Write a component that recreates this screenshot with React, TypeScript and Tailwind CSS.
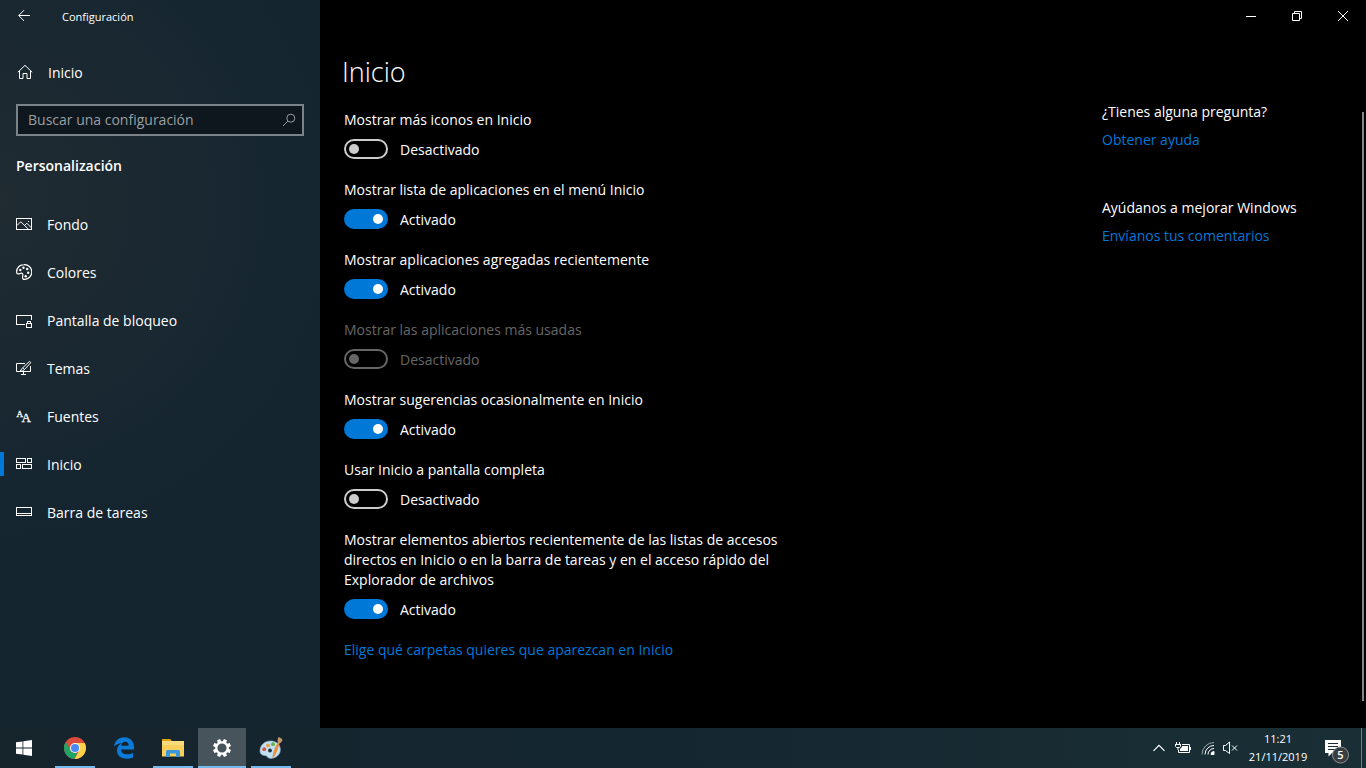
import { useState } from 'react';
import type { ReactNode } from 'react';

type IconProps = { children: ReactNode; crisp?: boolean };

function Icon16({ children, crisp }: IconProps) {
  return (
    <svg
      viewBox="0 0 16 16"
      className="size-4 shrink-0"
      fill="none"
      stroke="currentColor"
      shapeRendering={crisp ? 'crispEdges' : 'auto'}
      aria-hidden="true"
    >
      {children}
    </svg>
  );
}

const navItems: { label: string; icon: ReactNode; current?: boolean }[] = [
  {
    label: 'Fondo',
    icon: (
      <Icon16>
        <rect x=".5" y="2.5" width="15" height="11" />
        <path d="M1 9.500 4.800 5.700 12.300 13.200M8.600 9.400 10.800 7.200 15.400 11.800" />
        <path d="M12 5.500h1" />
      </Icon16>
    ),
  },
  {
    label: 'Colores',
    icon: (
      <Icon16>
        <path
          d="M.6 7.800C.8 3.400 4 .6 8 .6a7.400 7.400 0 0 1 .8 14.800c-1.600.1-2.300-.7-2.300-1.800 0-1.500.8-2.800 0-3.900-.7-1-1.700-.5-2.600-.1C2 10.300.5 9.700.6 7.800Z"
          strokeWidth="1.200"
        />
        <g fill="currentColor" stroke="none">
          <circle cx="4.300" cy="6" r="1.200" />
          <circle cx="7.500" cy="3.800" r="1.200" />
          <circle cx="11.200" cy="5" r="1.200" />
          <circle cx="12.200" cy="8.800" r="1.200" />
          <circle cx="9.700" cy="12.200" r="1.200" />
        </g>
      </Icon16>
    ),
  },
  {
    label: 'Pantalla de bloqueo',
    icon: (
      <Icon16 crisp>
        <path d="M9 12.500H.5V3.500H15.500V8" />
        <rect x="10.500" y="11.500" width="5" height="4" />
        <path d="M11.500 11V9.500H14.500V11" />
      </Icon16>
    ),
  },
  {
    label: 'Temas',
    icon: (
      <Icon16>
        <path d="M9 3.500H.5V11.500H14.500V6" />
        <path d="M7.500 11.500V14M5 14.500H10" />
        <path d="M4 10.500c1.500 0 1.300-1.500 2.300-2.300L13 1.800c.8-.7 2.100.4 1.400 1.300L8.500 9.500C7.500 10.900 5.500 11.200 4 10.500ZM6.600 7.900 8.500 9.600" />
      </Icon16>
    ),
  },
  {
    label: 'Fuentes',
    icon: (
      <Icon16>
        <g fill="currentColor" strokeWidth=".3" className="font-['Liberation_Serif',serif]">
          <text x=".5" y="9" fontSize="9">A</text>
          <text x="5.500" y="13.500" fontSize="13">A</text>
        </g>
      </Icon16>
    ),
  },
  {
    label: 'Inicio',
    current: true,
    icon: (
      <Icon16 crisp>
        <rect x=".5" y="2.500" width="9" height="4" />
        <rect x="11.500" y="2.500" width="4" height="4" />
        <rect x=".5" y="8.500" width="4" height="4" />
        <rect x="6.500" y="8.500" width="9" height="4" />
      </Icon16>
    ),
  },
  {
    label: 'Barra de tareas',
    icon: (
      <Icon16 crisp>
        <rect x=".5" y="3.500" width="15" height="8" />
        <path d="M1 9.500H15" />
      </Icon16>
    ),
  },
];

const settings = [
  { id: 'tiles', label: 'Mostrar más iconos en Inicio', on: false },
  { id: 'app-list', label: 'Mostrar lista de aplicaciones en el menú Inicio', on: true },
  { id: 'recent-apps', label: 'Mostrar aplicaciones agregadas recientemente', on: true },
  { id: 'most-used', label: 'Mostrar las aplicaciones más usadas', on: false, disabled: true },
  { id: 'suggestions', label: 'Mostrar sugerencias ocasionalmente en Inicio', on: true },
  { id: 'full-screen', label: 'Usar Inicio a pantalla completa', on: false },
  {
    id: 'recent-items',
    label:
      'Mostrar elementos abiertos recientemente de las listas de accesos directos en Inicio o en la barra de tareas y en el acceso rápido del Explorador de archivos',
    on: true,
  },
];

function Setting({ id, label, on, disabled }: { id: string; label: string; on: boolean; disabled?: boolean }) {
  const [checked, setChecked] = useState(on);
  return (
    <div className={disabled ? 'text-[#666666]' : 'text-white'}>
      <label htmlFor={id} className="block">{label}</label>
      <div className="mt-[9px] flex h-5 items-center gap-3">
        <input
          id={id}
          type="checkbox"
          role="switch"
          checked={checked}
          disabled={disabled}
          onChange={(e) => setChecked(e.target.checked)}
          className="flex h-5 w-11 shrink-0 appearance-none items-center rounded-full border-2 border-[#cccccc] px-[3px] before:size-2.5 before:rounded-full before:bg-[#cccccc] checked:justify-end checked:border-[#0078d7] checked:bg-[#0078d7] checked:before:bg-white disabled:border-[#666666] disabled:before:bg-[#666666]"
        />
        <span className="pt-0.5">{checked ? 'Activado' : 'Desactivado'}</span>
      </div>
    </div>
  );
}

function Sidebar() {
  return (
    <aside className="flex w-80 shrink-0 flex-col bg-[#142530] bg-[radial-gradient(circle_at_0%_28%,#202b32_0%,#142530_55%)]">
      <header className="flex h-8 items-center">
        <button aria-label="Atrás" className="flex h-8 w-12 items-center justify-center">
          <svg viewBox="0 0 12 12" className="size-3" fill="none" stroke="currentColor" aria-hidden="true">
            <path d="M12 5.500H.8M6 .2.7 5.500 6 10.800" />
          </svg>
        </button>
        <h2 className="ml-3.5 pt-0.5 text-[11px]">Configuración</h2>
      </header>
      <a href="#inicio" className="mt-4 flex h-12 items-center gap-[15px] pl-[17px]">
        <Icon16>
          <path d="M.8 8.300 8 1.300l7.200 7M2.500 7v7.500h3.500v-5h4v5h3.500V7" />
        </Icon16>
        <span className="pt-0.5">Inicio</span>
      </a>
      <div className="mx-4 mt-2 flex h-8 items-center border-2 border-[#7a8388] bg-[#0d171d] pr-1.5 pl-2.5 text-[#9b9fa1]">
        <input
          type="search"
          aria-label="Buscar una configuración"
          placeholder="Buscar una configuración"
          className="min-w-0 flex-1 bg-transparent outline-none placeholder:text-[#9b9fa1]"
        />
        <svg viewBox="0 0 14 14" className="size-3.5" fill="none" stroke="currentColor" aria-hidden="true">
          <circle cx="8.800" cy="5.200" r="4" />
          <path d="M5.900 8.100 1 13" />
        </svg>
      </div>
      <h2 className="mx-4 mt-5 font-semibold">Personalización</h2>
      <nav className="mt-6 flex flex-col">
        {navItems.map((item) => (
          <a
            key={item.label}
            href={'#' + item.label.toLowerCase().replaceAll(' ', '-')}
            aria-current={item.current ? 'page' : undefined}
            className="flex h-12 items-center"
          >
            <span className={item.current ? 'h-6 w-1 bg-[#0078d7]' : 'h-6 w-1'} />
            <span className="flex items-center gap-[15px] pl-3">
              {item.icon}
              <span className="pt-0.5">{item.label}</span>
            </span>
          </a>
        ))}
      </nav>
    </aside>
  );
}

function WindowControls() {
  const button = 'flex h-8 w-[46px] items-center justify-center';
  const icon = { viewBox: '0 0 10 10', className: 'size-2.5', fill: 'none', stroke: 'currentColor', 'aria-hidden': true };
  return (
    <div className="flex justify-end">
      <button aria-label="Minimizar" className={button}>
        <svg {...icon}><path d="M0 5.500H10" /></svg>
      </button>
      <button aria-label="Restaurar" className={button}>
        <svg {...icon}><path d="M.5 2.500H7.500V9.500H.5ZM2.500 2.500V.5H9.500V7.500H7.500" /></svg>
      </button>
      <button aria-label="Cerrar" className={button}>
        <svg {...icon}><path d="M0 0 10 10M10 0 0 10" /></svg>
      </button>
    </div>
  );
}

function Chrome() {
  return (
    <svg viewBox="0 0 24 24" className="size-6" aria-hidden="true">
      <circle cx="12" cy="12" r="11" fill="#dd4b3e" />
      <path d="M12 7H21.800A11 11 0 0 1 11.500 23L16.300 14.500Z" fill="#fdd14a" />
      <path d="M2.800 6 7.700 14.500C9 16.800 12 17.800 14.600 16.600L11.200 23A11 11 0 0 1 2.800 6Z" fill="#1fa463" />
      <circle cx="12" cy="12" r="5.100" fill="#f4f4f4" />
      <circle cx="12" cy="12" r="4" fill="#4a8af4" />
    </svg>
  );
}

function Edge() {
  return (
    <svg viewBox="0 0 24 24" className="size-6" aria-hidden="true">
      <path
        d="M2 10.500C2.900 5 6.600 1.300 12.200 1.300c6 0 9.800 4 9.800 9.700v2.500H9c.2 3.300 3 4.800 6.200 4.800 2.200 0 4.100-.6 5.900-1.600v4.500c-2 1-4.300 1.500-6.800 1.500C8.600 22.700 5 19.300 5 14.500c0-3.500 1.900-6 4.800-7.600C6.600 7.300 4 8.500 2 10.500ZM9.100 9.700h7.600c0-2.300-1.300-3.900-3.700-3.900-2.200 0-3.600 1.700-3.900 3.900Z"
        fill="#0b7ad8"
      />
    </svg>
  );
}

function Explorer() {
  return (
    <svg viewBox="0 0 24 24" className="size-6" aria-hidden="true">
      <path d="M1 3h8.500l1.500 2.500H1Z" fill="#e0a010" />
      <path d="M1 5H23V20.500H1Z" fill="#f9cf5c" />
      <path d="M1 5H23V9H1Z" fill="#fbdb7c" />
      <path d="M5 21V15.500a1.500 1.500 0 0 1 1.500-1.500h11a1.500 1.500 0 0 1 1.500 1.500V21H15v-3.500H9V21Z" fill="#3b96dc" />
    </svg>
  );
}

function Gear() {
  return (
    <svg viewBox="0 0 20 20" className="size-5" fill="#fff" aria-hidden="true">
      {[0, 45, 90, 135, 180, 225, 270, 315].map((angle) => (
        <path key={angle} d="M8 4.500 8.400 1h3.200L12 4.500Z" transform={'rotate(' + (angle + 22.5) + ' 10 10)'} />
      ))}
      <circle cx="10" cy="10" r="5.700" fill="none" stroke="#fff" strokeWidth="2.200" />
    </svg>
  );
}

function Paint() {
  return (
    <svg viewBox="0 0 24 24" className="size-6" aria-hidden="true">
      <path d="M1 15C1 8.500 6.500 4.500 12.500 5c5.500.5 9 4 8.800 9-.2 5-4.500 8.300-9.500 8.400-3.400 0-3.300-2.400-5.700-2.800C3 19.200 1 18 1 15Z" fill="#c2e0f2" stroke="#8bb9d6" strokeWidth=".6" />
      <circle cx="5.200" cy="13.200" r="1.900" fill="#d94d3a" />
      <circle cx="9" cy="9.400" r="1.900" fill="#e8a33b" />
      <circle cx="14" cy="8.200" r="1.900" fill="#5cb246" />
      <circle cx="11" cy="14.500" r="1.900" fill="#203542" />
      <path d="M13.500 22.500c0-5 2.700-12 5.600-16.800l1.600.8C19.500 12 17 19 13.500 22.500Z" fill="#e98d3a" />
      <path d="M18.900 6.500c-.8-2 0-4.800 1-5.500 1.200.7 2.500 1.200 3.600 3-.4 1.500-1.500 2.800-3 3.400Z" fill="#c4976a" />
    </svg>
  );
}

function Task({ name, state, children }: { name: string; state: 'idle' | 'open' | 'active'; children: ReactNode }) {
  return (
    <button
      aria-label={name}
      className={'flex h-10 w-12 flex-col items-center ' + (state === 'active' ? 'bg-[#48545b]' : '')}
    >
      <span className="flex h-[38px] items-center pt-0.5">{children}</span>
      {state !== 'idle' && <span className={'h-0.5 bg-[#76b9ed] ' + (state === 'active' ? 'w-12' : 'w-10')} />}
    </button>
  );
}

function Taskbar() {
  return (
    <footer className="flex h-10 shrink-0 justify-between bg-[linear-gradient(90deg,#16242c_0%,#142630_45%,#1a2f35_100%)]">
      <div className="flex">
        <button aria-label="Inicio" className="flex h-10 w-12 items-center justify-center">
          <svg viewBox="0 0 16 16" className="size-4" fill="#fff" aria-hidden="true">
            <path d="M0 2.300 6.500 1.400V7.600H0ZM7.300 1.300 16 0V7.600H7.300ZM0 8.400H6.500V14.600L0 13.700ZM7.300 8.400H16V16L7.300 14.700Z" />
          </svg>
        </button>
        <div className="ml-[3px] flex gap-px">
          <Task name="Google Chrome" state="open"><Chrome /></Task>
          <Task name="Microsoft Edge" state="idle"><Edge /></Task>
          <Task name="Explorador de archivos" state="open"><Explorer /></Task>
          <Task name="Configuración" state="active"><Gear /></Task>
          <Task name="Paint" state="open"><Paint /></Task>
        </div>
      </div>
      <div className="flex items-center">
        <button aria-label="Mostrar iconos ocultos" className="flex h-10 w-6 items-center justify-center">
          <svg viewBox="0 0 12 8" className="h-2 w-3" fill="none" stroke="#fff" aria-hidden="true">
            <path d="M.5 6.800 6 1.300 11.500 6.800" strokeWidth="1.200" />
          </svg>
        </button>
        <button aria-label="Batería" className="flex h-10 w-6 items-center justify-center">
          <svg viewBox="0 0 16 12" className="h-3 w-4" fill="none" stroke="#fff" aria-hidden="true">
            <path d="M7 2.500H14.500V10.500H3.500V8" />
            <path d="M15.500 5V8" />
            <path d="M7 4H13V9H5V7L7 5Z" fill="#fff" stroke="none" />
            <path d="M1.500 0V2M4.500 0V2M0 2.500H6M.5 2.500V4.500L1.500 5.500H4.500L5.500 4.500V2.500M3 5.500V8" />
          </svg>
        </button>
        <button aria-label="Red" className="flex h-10 w-[26px] items-center justify-center">
          <svg viewBox="0 0 14 14" className="size-3.5" fill="none" stroke="#fff" aria-hidden="true">
            <path d="M1 13.500A12 12 0 0 1 13 1.500" opacity=".55" />
            <path d="M4 13.500A9 9 0 0 1 13 4.500M7 13.500A6 6 0 0 1 13 7.500" />
            <path d="M10 13.500A3 3 0 0 1 13 10.500V13.500Z" fill="#fff" />
          </svg>
        </button>
        <button aria-label="Volumen silenciado" className="flex h-10 w-[18px] items-center justify-center">
          <svg viewBox="0 0 16 14" className="h-3.5 w-4" fill="none" stroke="#fff" aria-hidden="true">
            <path d="M1.500 4.500H3.500L7.500 1V12.500L3.500 9.500H1.500Z" />
            <path d="M10 4.500 15 9.500M15 4.500 10 9.500" />
          </svg>
        </button>
        <button className="ml-1 flex h-10 w-[70px] flex-col items-center justify-center text-[11px] leading-[18px]">
          <time>11:21</time>
          <time>21/11/2019</time>
        </button>
        <button aria-label="Notificaciones: 5" className="flex h-10 w-12 items-center justify-center">
          <svg viewBox="0 0 24 24" className="size-6 overflow-visible" aria-hidden="true">
            <path d="M0 4H16V17H7L3.500 20.500V17H0Z" fill="#fff" />
            <path d="M3 7.500H13M3 10.500H13M3 13.500H10" stroke="#1a2f35" />
            <circle cx="15.500" cy="19" r="8" fill="#3b3e40" stroke="#8b8f91" />
            <text x="15.500" y="23" textAnchor="middle" fontSize="11" fontWeight="600" fill="#fff">5</text>
          </svg>
        </button>
        <span className="mr-1 h-10 w-px bg-[#6d7a7e]" />
      </div>
    </footer>
  );
}

export default function App() {
  return (
    <div className="flex min-h-screen flex-col bg-black font-['Open_Sans','Noto_Sans',sans-serif] text-[14px] leading-5 text-white">
      <div className="flex flex-1">
        <Sidebar />
        <main className="flex min-w-0 flex-1 flex-col">
          <WindowControls />
          <div className="flex flex-1 pt-5 pl-[22px]">
            <div className="min-w-0 flex-1">
              <h1 className="text-[27px] leading-10 font-light">Inicio</h1>
              <div className="mt-[18px] flex max-w-[450px] flex-col gap-[21px] pl-0.5">
                {settings.map((setting) => (
                  <Setting key={setting.id} {...setting} />
                ))}
                <a href="#carpetas" className="text-[#0078d7]">Elige qué carpetas quieres que aparezcan en Inicio</a>
              </div>
            </div>
            <div className="flex w-[260px] shrink-0 flex-col gap-12 pt-[50px]">
              <section className="flex flex-col gap-2">
                <h2>¿Tienes alguna pregunta?</h2>
                <a href="#ayuda" className="text-[#0078d7]">Obtener ayuda</a>
              </section>
              <section className="flex flex-col gap-2">
                <h2>Ayúdanos a mejorar Windows</h2>
                <a href="#comentarios" className="text-[#0078d7]">Envíanos tus comentarios</a>
              </section>
            </div>
            <div className="mt-[60px] mr-0.5 mb-[27px] w-0.5 bg-[#858585]" />
          </div>
        </main>
      </div>
      <Taskbar />
    </div>
  );
}
